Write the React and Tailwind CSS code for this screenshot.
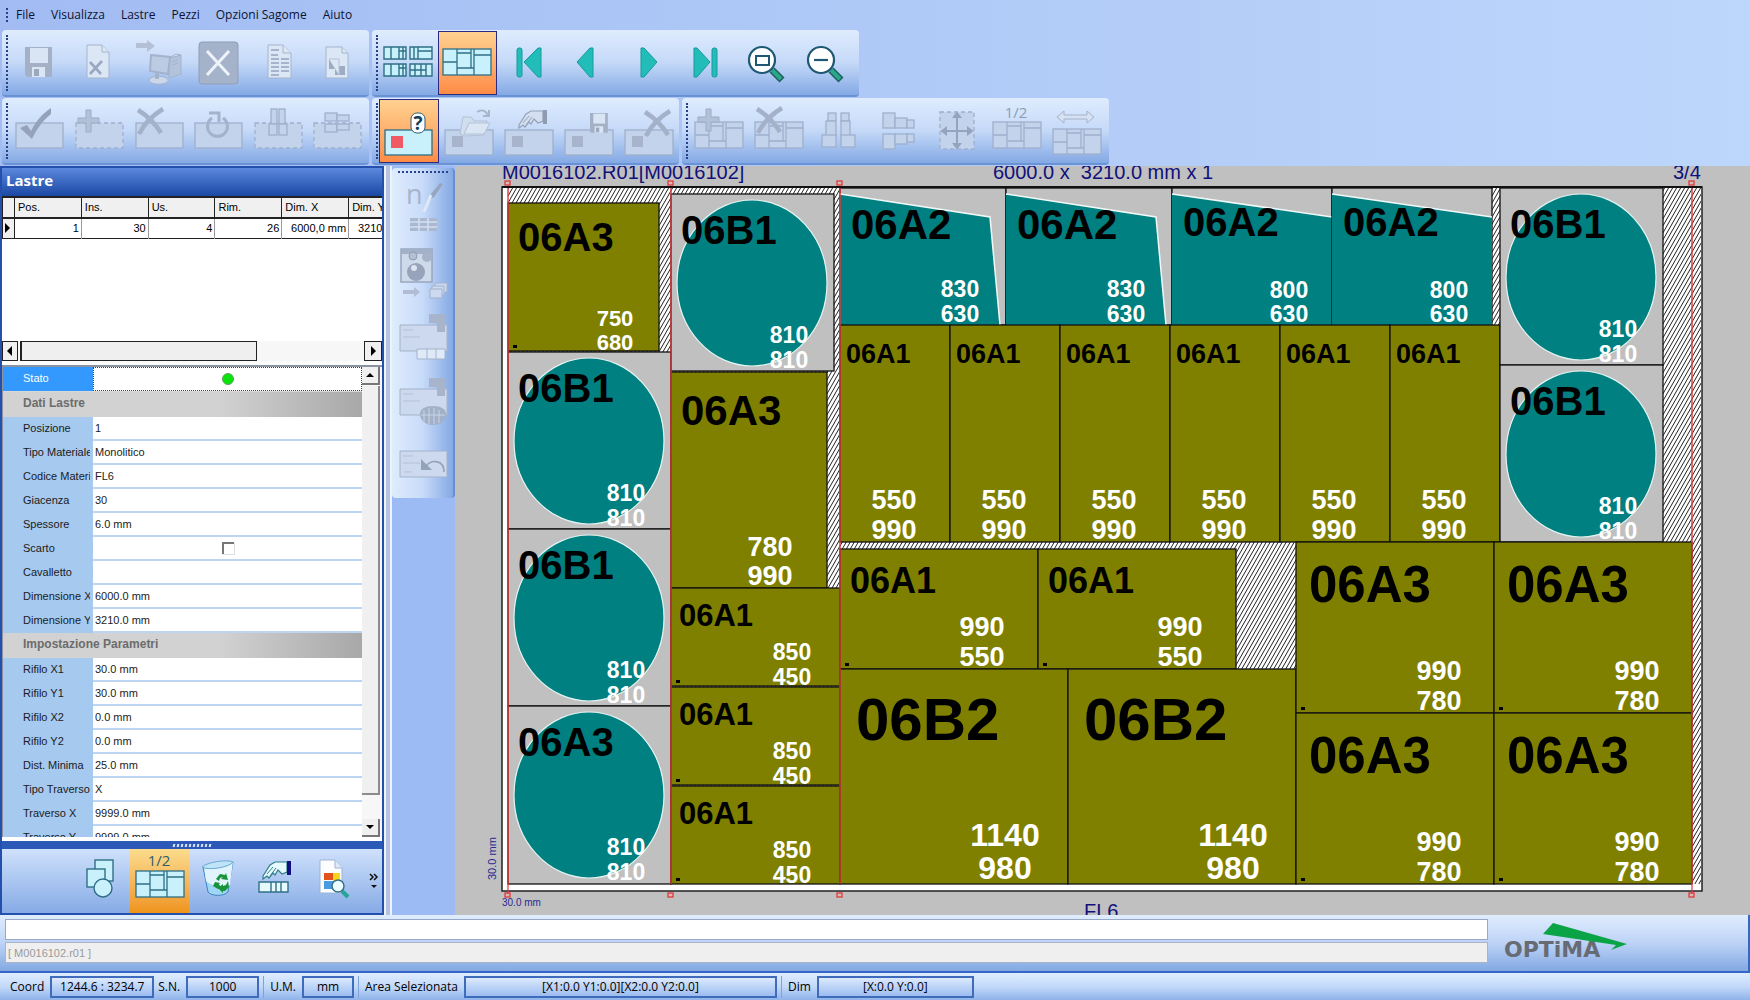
import { useState } from "react";

const menu = ["File", "Visualizza", "Lastre", "Pezzi", "Opzioni Sagome", "Aiuto"];

const columns = ["Pos.", "Ins.", "Us.", "Rim.", "Dim. X", "Dim. Y"];
const slabRow = ["1", "30", "4", "26", "6000,0 mm", "3210,0 mm"];

const properties = [
  { group: "Dati Lastre" },
  { label: "Posizione", value: "1" },
  { label: "Tipo Materiale", value: "Monolitico" },
  { label: "Codice Materiale", value: "FL6" },
  { label: "Giacenza", value: "30" },
  { label: "Spessore", value: "6.0 mm" },
  { label: "Scarto", check: true },
  { label: "Cavalletto", value: "" },
  { label: "Dimensione X", value: "6000.0 mm" },
  { label: "Dimensione Y", value: "3210.0 mm" },
  { group: "Impostazione Parametri" },
  { label: "Rifilo X1", value: "30.0 mm" },
  { label: "Rifilo Y1", value: "30.0 mm" },
  { label: "Rifilo X2", value: "0.0 mm" },
  { label: "Rifilo Y2", value: "0.0 mm" },
  { label: "Dist. Minima", value: "25.0 mm" },
  { label: "Tipo Traverso", value: "X" },
  { label: "Traverso X", value: "9999.0 mm" },
  { label: "Traverso Y", value: "9999.0 mm" },
];

/* ── Piece kinds: size, code text and dimension text, offsets from the piece corner ── */
const kinds = {
  a3s: { w: 151, h: 148, code: "06A3", fs: 40, cx: 10, cy: 48, dims: ["750", "680"], ds: 22, dx: 107, d1: 123, d2: 147, dot: true },
  a3m: { w: 156, h: 216, code: "06A3", fs: 42, cx: 10, cy: 53, dims: ["780", "990"], ds: 27, dx: 99, d1: 184, d2: 213 },
  a3l: { w: 198, h: 171, code: "06A3", fs: 51, cx: 13, cy: 60, dims: ["990", "780"], ds: 27, dx: 143, d1: 138, d2: 168, dot: true },
  b1: { w: 163, h: 177, code: "06B1", fs: 40, cx: 10, cy: 50, dims: ["810", "810"], ds: 23, dx: 118, d1: 149, d2: 174, circle: true },
  b1c: { w: 163, h: 178, code: "06A3", fs: 40, cx: 10, cy: 50, dims: ["810", "810"], ds: 23, dx: 118, d1: 149, d2: 174, circle: true },
  a1s: { w: 169, h: 98, code: "06A1", fs: 31, cx: 8, cy: 38, dims: ["850", "450"], ds: 23, dx: 121, d1: 72, d2: 97, dot: true },
  a1t: { w: 110, h: 217, code: "06A1", fs: 27, cx: 6, cy: 38, dims: ["550", "990"], ds: 27, dx: 54, d1: 184, d2: 214 },
  a1w: { w: 198, h: 120, code: "06A1", fs: 36, cx: 10, cy: 44, dims: ["990", "550"], ds: 27, dx: 142, d1: 87, d2: 117, dot: true },
  a2a: { w: 166, h: 137, code: "06A2", fs: 42, cx: 11, cy: 51, dims: ["830", "630"], ds: 23, dx: 120, d1: 109, d2: 134, shape: "0,6 150,29 160,137 0,137", edge: "0,6 150,29 160,137" },
  a2b: { w: 160, h: 137, code: "06A2", fs: 40, cx: 11, cy: 48, dims: ["800", "630"], ds: 23, dx: 117, d1: 110, d2: 134, shape: "0,6 160,29 160,137 0,137", edge: "0,6 160,29" },
  b2: { w: 228, h: 215, code: "06B2", fs: 60, cx: 16, cy: 71, dims: ["1140", "980"], ds: 32, dx: 165, d1: 177, d2: 210 },
};

const pieces = [
  ["a3s", 508, 203],
  ["b1", 508, 352],
  ["b1", 508, 529],
  ["b1c", 508, 706],
  ["b1", 671, 194],
  ["a3m", 671, 372],
  ["a1s", 671, 588],
  ["a1s", 671, 687],
  ["a1s", 671, 786],
  ["a2a", 840, 188],
  ["a2a", 1006, 188],
  ["a2b", 1172, 188],
  ["a2b", 1332, 188],
  ["a1t", 840, 325],
  ["a1t", 950, 325],
  ["a1t", 1060, 325],
  ["a1t", 1170, 325],
  ["a1t", 1280, 325],
  ["a1t", 1390, 325],
  ["b1", 1500, 188],
  ["b1", 1500, 365],
  ["a1w", 840, 549],
  ["a1w", 1038, 549],
  ["b2", 840, 669],
  ["b2", 1068, 669],
  ["a3l", 1296, 542],
  ["a3l", 1494, 542],
  ["a3l", 1296, 713],
  ["a3l", 1494, 713],
];

const cuts = [508, 671, 840, 1692];

/* ── Icons ── */
const ON = { stroke: "#2f6f86", fill: "#c9f1fc" };
const OFF = { stroke: "#9fb0cd", fill: "#c3d3ec" };

const Plate = ({ x, y, c = OFF, h = 26 }) => (
  <g transform={`translate(${x} ${y})`} stroke={c.stroke} strokeWidth="1.3">
    <rect width="48" height={h} fill={c.fill} />
    <path d={`M14 0v${h}M0 13h14M14 4h14M14 19h17M28 0v19M31 0v${h}M31 6h17`} fill="none" />
  </g>
);

const Box = ({ x, y, w, h, c = OFF, dash }) => (
  <rect x={x} y={y} width={w} height={h} fill={c.fill} stroke={c.stroke} strokeWidth="1.3" strokeDasharray={dash ? "4 3" : undefined} />
);

const Cross = ({ x, y }) => (
  <path
    transform={`translate(${x} ${y})`}
    d="M1 1c8 5 17 13 23 23M26 0C16 6 7 15 2 25"
    stroke="#a4b2c9"
    strokeWidth="4.5"
    fill="none"
  />
);

const Plus = ({ x, y }) => (
  <path transform={`translate(${x} ${y})`} d="M8 0h5v8h8v5h-8v9H8v-9H0V8h8z" fill="#b3c1d8" stroke="#9dabc4" />
);

const Hand = ({ x, y, on }) => (
  <g transform={`translate(${x} ${y})`}>
    <path d="M1 15 8 4 13 1h12v10l-5 2-4-4-3 5-2-2-4 5-2-2-4 3z" fill={on ? "#e6fafd" : "#d4e0f1"} stroke={on ? "#2f7f8a" : "#94a1b8"} strokeWidth="1.2" />
    <path d="m5 13 6-7m-3 9 6-8" stroke={on ? "#2f7f8a" : "#94a1b8"} fill="none" />
    <path d="M25 0h4v14h-4z" fill={on ? "#101080" : "#8f9bb0"} />
  </g>
);

const Lens = ({ children }) => (
  <>
    <path d="m39 39 10 10" stroke="#1f5f5c" strokeWidth="7" />
    <path d="m39 39 9 9" stroke="#2aa78a" strokeWidth="4" />
    <circle cx="29" cy="29" r="13" fill="#fff" stroke="#1f5872" strokeWidth="2.2" />
    {children}
  </>
);

const Floppy = ({ x, y, s = 1 }) => (
  <g transform={`translate(${x} ${y}) scale(${s})`}>
    <path d="M0 0h27v30H2l-2-2z" fill="#a3b0c6" />
    <path d="M5 1h18v15H5z" fill="#d9e4f4" />
    <path d="M7 20h13v10H7z" fill="#dbe5f3" />
    <path d="M9 22h5v7H9z" fill="#9ba9c0" />
  </g>
);

const PieceBox = () => (
  <>
    <Box x="6" y="31" w="48" h="25" />
    <path d="M13 37h11v11H13z" fill="#a7b4cb" />
  </>
);

const icons = {
  save: <Floppy x="16" y="16" />,
  discard: (
    <g stroke="#a6b5cd" fill="#dce7f6">
      <path d="M18 14h15l7 7v26H18z" />
      <path d="M33 14v7h7" />
      <path d="m21 31 11 12m1-13L21 43" strokeWidth="2.6" stroke="#9aa8bf" />
    </g>
  ),
  send: (
    <g stroke="#a4b3cc">
      <path d="M7 12h11V9l8 6-8 6v-4H7z" fill="#b3c0d5" stroke="none" />
      <path d="m40 27 12-3v19l-12 4z" fill="#b3c3db" />
      <path d="m40 27 7-4 5 1-12 3z" fill="#dbe6f5" />
      <path d="m22 24 19 2-2 17-18-3z" fill="#bccbe2" strokeWidth="2" />
      <path d="M20 49c1-5 18-5 19 0s-18 6-19 0z" fill="#ccd8ea" />
      <path d="M28 42v6" strokeWidth="4" />
      <path d="m43 31 6-2m-6 5 6-2" />
    </g>
  ),
  close: (
    <>
      <rect x="10" y="11" width="39" height="42" rx="3" fill="#a5b3ca" stroke="#8f9fb9" />
      <path d="m18 20 22 24m0-24L18 44" stroke="#eef3fb" strokeWidth="3" />
    </>
  ),
  list: (
    <g stroke="#a6b5cd" fill="#dce7f6">
      <path d="M19 14h15l8 8v25H19z" />
      <path d="M34 14v8h8" />
      <path d="M22 19h8m-8 5h7m-7 4h8m2 0h8m-18 4h8m2 0h8m-18 4h8m2 0h8m-18 4h8m2 0h8m-18 4h8" stroke="#94a3bc" strokeWidth="1.6" />
    </g>
  ),
  sheet: (
    <g stroke="#a6b5cd" fill="#dce7f6">
      <path d="M17 16h16l6 6v25H17z" />
      <path d="M33 16v6h6" />
      <path d="M20 28h10v7h6v9H26v-6h-6z" fill="#9eacc3" stroke="none" />
      <path d="M20 28h10v16" stroke="#b6c3d8" />
    </g>
  ),
  check: (
    <>
      <Box x="7" y="24" w="47" h="25" />
      <path d="m11 29 7-3 4 6c5-10 11-17 20-23v6c-9 7-14 15-19 25z" fill="#94a2ba" />
    </>
  ),
  add: (
    <>
      <Box x="7" y="24" w="47" h="25" dash />
      <Plus x="9" y="11" />
    </>
  ),
  remove: (
    <>
      <Box x="7" y="24" w="47" h="25" />
      <Cross x="8" y="10" />
    </>
  ),
  rotate: (
    <>
      <Box x="6" y="24" w="47" h="25" />
      <path d="M23 19a10 10 0 1 0 11 0M20 14h10v9" stroke="#a4b3cc" strokeWidth="3" fill="none" />
    </>
  ),
  alignV: (
    <>
      <Box x="6" y="24" w="47" h="25" dash />
      <Box x="22" y="10" w="6" h="15" />
      <Box x="30" y="10" w="6" h="15" />
      <Box x="20" y="25" w="8" h="11" />
      <Box x="30" y="25" w="8" h="11" />
    </>
  ),
  alignH: (
    <>
      <Box x="5" y="24" w="47" h="25" dash />
      <Box x="16" y="14" w="12" h="8" />
      <Box x="28" y="16" w="12" h="6" />
      <Box x="16" y="25" w="12" h="8" />
      <Box x="28" y="25" w="12" h="6" />
    </>
  ),
  multi: (
    <g stroke="#2f6f86" strokeWidth="1.4" fill="#c9f1fc">
      <path d="M5 16h22v12H5zM31 16h22v12H31zM5 33h22v12H5zM31 33h22v12H31z" />
      <path d="M12 16v12m8-12v12m4-12v12m-4-8h7M35 16v12m4-12v12m0-8h14M12 33v12m8-12v12m4-12v12m-4-8h7M31 39h16m-11-6v12m6-12v12m5-12v12" fill="none" />
    </g>
  ),
  single: <Plate x="5" y="18" c={ON} />,
  first: (
    <g fill="#22bdb8" stroke="#169a9a">
      <rect x="20" y="17" width="5" height="29" rx="2" />
      <path d="M44 17v29h-3L27 31l14-14z" strokeLinejoin="round" />
    </g>
  ),
  prev: <path d="M37 17v29h-3L21 31l13-14z" fill="#22bdb8" stroke="#169a9a" strokeLinejoin="round" />,
  next: <path d="M26 17v29h3l13-15-13-14z" fill="#22bdb8" stroke="#169a9a" strokeLinejoin="round" />,
  last: (
    <g fill="#22bdb8" stroke="#169a9a">
      <path d="M20 17v29h3l13-15-13-14z" strokeLinejoin="round" />
      <rect x="38" y="17" width="5" height="29" rx="2" />
    </g>
  ),
  zoomFit: (
    <Lens>
      <path d="M23 25h13v9H23z" fill="none" stroke="#1f5872" strokeWidth="2" />
    </Lens>
  ),
  zoomOut: (
    <Lens>
      <path d="M22 29h14" stroke="#1f5872" strokeWidth="2.2" />
    </Lens>
  ),
  query: (
    <>
      <Box x="6" y="31" w="47" h="25" c={ON} />
      <path d="M12 37h12v12H12z" fill="#f05a64" />
      <rect x="32" y="14" width="14" height="20" rx="6" fill="#fff" stroke="#2f5f76" />
      <text x="39" y="31" textAnchor="middle" fontSize="19" fontWeight="700" fill="#123f5c">?</text>
    </>
  ),
  open: (
    <>
      <PieceBox />
      <path d="M21 35 24 18h8l3 4h13l-3 14-19 1z" fill="#d1deef" stroke="#b3c1d8" />
      <path d="m25 35 5-11h21l-6 11z" fill="#dbe6f5" stroke="#b3c1d8" />
      <path d="M38 13c5-3 8-2 11 3m1-5v6h-6" stroke="#a8b6cc" strokeWidth="2" fill="none" />
    </>
  ),
  handPiece: (
    <>
      <PieceBox />
      <Hand x="19" y="11" />
    </>
  ),
  savePiece: (
    <>
      <PieceBox />
      <Floppy x="31" y="14" s="0.66" />
    </>
  ),
  deletePiece: (
    <>
      <PieceBox />
      <Cross x="25" y="12" />
    </>
  ),
  addPlate: (
    <>
      <Plate x="6" y="23" />
      <Plus x="9" y="10" />
    </>
  ),
  removePlate: (
    <>
      <Plate x="6" y="23" />
      <Cross x="7" y="9" />
    </>
  ),
  stackV: (
    <>
      <Box x="19" y="14" w="8" h="8" />
      <Box x="17" y="22" w="10" h="15" />
      <Box x="13" y="36" w="14" h="12" />
      <Box x="32" y="14" w="8" h="8" />
      <Box x="32" y="22" w="9" h="15" />
      <Box x="32" y="36" w="14" h="12" />
    </>
  ),
  stackH: (
    <>
      <Box x="14" y="14" w="12" h="15" />
      <Box x="26" y="19" w="12" h="10" />
      <Box x="38" y="21" w="7" h="8" />
      <Box x="14" y="35" w="12" h="15" />
      <Box x="26" y="35" w="12" h="10" />
      <Box x="38" y="35" w="7" h="8" />
    </>
  ),
  move: (
    <>
      <Box x="11" y="13" w="34" h="37" dash />
      <g stroke="#94a4bf" strokeWidth="2" fill="#94a4bf">
        <path d="M28 17v30M15 32h26" />
        <path d="m28 14 3 4h-6zm0 35 3-4h-6zM13 32l4-3v6zm30 0-4-3v6z" />
      </g>
    </>
  ),
  half: (
    <>
      <Plate x="4" y="23" />
      <text x="27" y="19" textAnchor="middle" fontSize="15" fill="#8d9cb5">1/2</text>
    </>
  ),
  stretch: (
    <>
      <path d="m8 18 7-6v4h23v-4l7 6-7 6v-4H15v4z" fill="#d6e2f3" stroke="#a4b3cc" />
      <Plate x="4" y="30" h="25" />
    </>
  ),
  shapes: (
    <g fill="#c9f1fc" stroke="#2f6f86" strokeWidth="1.4">
      <rect x="24" y="11" width="18" height="21" />
      <rect x="16" y="20" width="18" height="18" />
      <circle cx="32" cy="39" r="9" />
    </g>
  ),
  halfOn: (
    <>
      <Plate x="6" y="22" c={ON} />
      <text x="29" y="17" textAnchor="middle" fontSize="15" fill="#2f5f6c">1/2</text>
    </>
  ),
  bin: (
    <>
      <path d="m14 18 5 25c3 4 15 5 20 0l5-30-12 4c-6 2-13 2-18 1z" fill="#9fd5f5" stroke="#3f83c0" />
      <path d="m15 18 17-1 12-5-3 24-7 6c-2-7-12-4-17-10z" fill="#e1f4fd" />
      <path d="M13 18c5-5 26-8 31-5-3 5-24 9-31 5z" fill="#bfe3f7" stroke="#6aa9d6" />
      <path d="m27 30 4-5 5 1 1-2 2 7-7-1 2-2-3 1-1 3zm12 2 1 6-4 4h-2v2l-5-5 5-4v2l3-1zm-13 1 5 1-1 1 2 4-3 1-5-3z" fill="#179437" />
    </>
  ),
  handStock: (
    <>
      <Hand x="14" y="12" on />
      <path d="M11 33h29v10H11z" fill="#e6fafd" stroke="#2f6f86" strokeWidth="1.4" />
      <path d="M23 33v10m5-10v10m5-10v10" stroke="#2f6f86" strokeWidth="1.4" />
    </>
  ),
  preview: (
    <>
      <path d="M13 11h15l7 8v25H13z" fill="#fbfdff" stroke="#9fb3d4" />
      <path d="M28 11v8h7" fill="#dfe9f8" stroke="#9fb3d4" />
      <path d="M17 24h9v7h-9z" fill="#e4521c" />
      <path d="M26 24h7v9h-7z" fill="#f8d51c" />
      <path d="M17 32h9v8h-9z" fill="#4b9be0" />
      <path d="m35 42 6 6" stroke="#27a59a" strokeWidth="4" />
      <circle cx="31" cy="37" r="6" fill="#eefcff" stroke="#2f6f86" strokeWidth="1.4" />
    </>
  ),
  note: (
    <>
      <path d="m50 8-9 13-4 2 1-5 9-11z" fill="#97a5bc" />
      <path d="m38 19-7 17" stroke="#dfe8f5" strokeWidth="3" />
      <text x="13" y="28" fontSize="27" fill="#a7b4ca">n</text>
      <path d="M17 42h27v13H17z" fill="#aab8d0" />
      <path d="M17 46h27M17 51h27M26 42v13m9-13v13" stroke="#d3dff1" strokeWidth="1.5" />
    </>
  ),
  balls: (
    <>
      <rect x="8" y="9" width="31" height="33" fill="#ced9ea" stroke="#98a7c0" strokeWidth="1.5" />
      <path d="M8 9h31v5H8z" fill="#a3b1c8" />
      <circle cx="20" cy="16" r="4" fill="#b3bfd2" stroke="#8d9bb3" />
      <circle cx="34" cy="17" r="5" fill="#a6b3c9" />
      <circle cx="23" cy="32" r="9" fill="#96a3ba" />
      <circle cx="21" cy="28" r="3" fill="#dbe4f0" />
      <path d="M10 50h11v-3l6 5-6 5v-3H10z" fill="#b0bdd2" />
      <path d="M37 49h12v9H37zM39 49v-3h12v9h-2M42 46v-3h12v9h-2" fill="#ccd9ee" stroke="#a4b3cc" />
    </>
  ),
  toStock: (
    <>
      <path d="M7 21h47v26H7z" fill="#ccd9ee" stroke="#a4b3cc" />
      <path d="M10 33h17m-17-7h10" stroke="#b3c1d8" />
      <path d="M36 10h16v18h-8v-9h-8z" fill="#a7b4cb" />
      <path d="M24 45h28v10H24zM34 45v10m9-10v10" fill="#e0e9f7" stroke="#a4b3cc" />
    </>
  ),
  toBasket: (
    <>
      <path d="M7 21h47v26H7z" fill="#ccd9ee" stroke="#a4b3cc" />
      <path d="M10 33h17m-17-7h10" stroke="#b3c1d8" />
      <path d="M36 10h16v18h-8v-9h-8z" fill="#a7b4cb" />
      <path d="M27 46c0-5 5-8 13-8s13 3 13 8-4 11-13 11-13-6-13-11z" fill="#a3b1c8" />
      <path d="M31 42v12m5-14v16m5-16v16m5-14v13M28 47h24" stroke="#c8d4e6" />
    </>
  ),
  undo: (
    <>
      <path d="M7 19h47v26H7z" fill="#ccd9ee" stroke="#a4b3cc" />
      <path d="M10 31h17m-17-7h10M11 40h8" stroke="#b3c1d8" />
      <path d="M28 27v11h11z" fill="#94a2ba" />
      <path d="M33 34c6-7 18-6 18 6" stroke="#94a2ba" strokeWidth="1.6" fill="none" />
    </>
  ),
};

const Icon = ({ name }) => (
  <svg viewBox="0 0 60 64" className="h-16 w-[60px] shrink-0 font-['Open_Sans',sans-serif]" aria-hidden="true">
    {icons[name]}
  </svg>
);

const ToolButton = ({ name, active, narrow }) => (
  <button
    aria-label={name}
    aria-pressed={active}
    className={`flex h-16 items-center justify-center overflow-hidden border ${narrow ? "w-[59px]" : "w-[60px]"} ${
      active ? "border-[#2a2a80] bg-linear-to-b from-[#ffd190] to-[#ff8c46]" : "border-transparent"
    }`}
  >
    <Icon name={name} />
  </button>
);

const ToolBar = ({ tools, active, narrow }) => (
  <div
    role="toolbar"
    className={`flex h-[67px] rounded-sm border-b-2 border-[#6a93d6] bg-linear-to-b from-[#dfecfe] via-[#c5d9f8] via-50% to-[#84a9e4] pt-px pl-1 ${narrow ? "pr-2" : ""}`}
  >
    <span className="my-1 w-[3px] border-l-2 border-dotted border-[#27418a]" />
    {tools.map((t) => (
      <ToolButton key={t} name={t} active={t === active} narrow={narrow} />
    ))}
  </div>
);

const Arrow = ({ d }) => (
  <svg viewBox="0 0 10 10" className="size-2.5" aria-hidden="true">
    <path d={d} fill="#000" />
  </svg>
);

const SlabTable = () => (
  <div className="flex h-[165px] flex-col justify-between overflow-hidden bg-white">
    <table className="w-[414px] table-fixed border-collapse text-[11px] leading-none">
      <thead>
        <tr className="h-[21px] border-y-2 border-[#222] bg-[#f0f0f0]">
          <th className="w-3 border border-[#222]" />
          {columns.map((c) => (
            <th key={c} className="overflow-hidden border-x border-[#222] pl-[3px] text-left font-normal whitespace-nowrap">
              {c}
            </th>
          ))}
        </tr>
      </thead>
      <tbody>
        <tr className="h-5 border-b border-[#222]">
          <td className="border border-[#222] bg-[#f0f0f0]">
            <Arrow d="M2 0v10l5-5z" />
          </td>
          {slabRow.map((v, i) => (
            <td key={i} className="overflow-hidden border-r border-[#999] pr-0.5 text-right whitespace-nowrap">
              {v}
            </td>
          ))}
        </tr>
      </tbody>
    </table>
    <div className="flex h-5 bg-[#f7f7f7]">
      <button aria-label="Sinistra" className="flex w-4 items-center justify-center border border-[#222] bg-[#f0f0f0]">
        <Arrow d="M7 0v10L2 5z" />
      </button>
      <div className="ml-0.5 w-[237px] border border-l-2 border-[#222] bg-[#efefef]" />
      <button aria-label="Destra" className="ml-auto flex w-[18px] items-center justify-center border border-[#222] bg-[#f0f0f0]">
        <Arrow d="M3 0v10l5-5z" />
      </button>
    </div>
  </div>
);

const PropertyRow = ({ item }) => {
  const id = item.label.replace(/\W/g, "");
  return (
    <div className="flex h-6 shrink-0">
      <label htmlFor={id} className="w-[90px] shrink-0 overflow-hidden border-r-3 border-[#a6c9ef] bg-[#a6c9ef] pl-5 leading-[22px] whitespace-nowrap">
        {item.label}
      </label>
      <div className="flex min-w-0 flex-1 items-center justify-center border-b-2 border-[#bdd5f3] bg-white">
        {item.check ? (
          <input id={id} type="checkbox" className="size-3 appearance-none border-t-2 border-l-2 border-[#777] bg-white shadow-[1px_1px_0_#ddd]" />
        ) : (
          <input id={id} defaultValue={item.value} className="w-full bg-transparent pl-0.5 outline-none" />
        )}
      </div>
    </div>
  );
};

const Properties = () => (
  <div className="flex min-h-0 flex-1 overflow-hidden border-t-2 border-l border-[#8a93a0] text-[11px] text-[#1b1b1b]">
    <div className="flex min-w-0 flex-1 flex-col overflow-hidden">
      <div className="flex h-[25px] shrink-0 border-b border-[#d8d8d8]">
        <span className="w-[90px] bg-[#3399ff] pl-5 leading-[22px] text-white">Stato</span>
        <span className="flex flex-1 items-center justify-center border border-dotted border-[#444] bg-white">
          <span className="size-3 rounded-full border border-[#5fa05f] bg-[#0be40b]" />
        </span>
      </div>
      {properties.map((p) =>
        p.group ? (
          <h3
            key={p.group}
            className="h-[25px] shrink-0 bg-linear-to-r from-[#d2d2d2] from-60% to-[#a8a8a8] pl-5 text-[12px] leading-[22px] font-bold text-[#6c6c6c]"
          >
            {p.group}
          </h3>
        ) : (
          <PropertyRow key={p.label} item={p} />
        )
      )}
    </div>
    <div className="flex w-5 flex-col bg-[#f7f7f7] pr-0.5">
      <button aria-label="Su" className="flex h-[18px] items-center justify-center border-r-2 border-b-2 border-[#777] bg-[#f0f0f0]">
        <Arrow d="M1 7h8L5 3z" />
      </button>
      <div className="mt-px mb-6 flex-1 border-r-2 border-b-2 border-[#8c8c8c] bg-[#f0f0f0]" />
      <button aria-label="Giù" className="flex h-[18px] items-center justify-center border-r-2 border-b-2 border-[#777] bg-[#f0f0f0]">
        <Arrow d="M1 3h8L5 7z" />
      </button>
    </div>
  </div>
);

const SidePanel = () => {
  const [tab, setTab] = useState("halfOn");
  return (
    <aside className="flex w-96 shrink-0 flex-col border-2 border-[#2350ad] bg-white">
      <h2 className="h-7 shrink-0 bg-linear-to-b from-[#5c88dd] to-[#1a48a4] pl-1 font-['Open_Sans',sans-serif] text-[15px] leading-[24px] font-bold text-white">
        Lastre
      </h2>
      <SlabTable />
      <div className="h-1 shrink-0" />
      <Properties />
      <div className="mt-1 flex h-2 shrink-0 items-center justify-center gap-0.5 bg-[#2c59b8]">
        {Array.from({ length: 10 }, (_, i) => (
          <span key={i} className="h-[3px] w-0.5 -skew-x-12 bg-[#dce8fb]" />
        ))}
      </div>
      <div className="flex h-16 shrink-0 justify-end bg-linear-to-b from-[#cfe1fb] to-[#87abe6]">
        {["shapes", "halfOn", "bin", "handStock", "preview"].map((t) => (
          <button
            key={t}
            aria-label={t}
            onClick={() => setTab(t)}
            className={`flex w-[59px] justify-center overflow-hidden ${tab === t ? "bg-linear-to-b from-[#fbdc8c] to-[#ee9417]" : ""}`}
          >
            <Icon name={t} />
          </button>
        ))}
        <button aria-label="Altro" className="flex w-4 items-center justify-center">
          <svg viewBox="0 0 10 18" className="h-[18px] w-2.5">
            <path d="m1 2 3 3-3 3m4-6 3 3-3 3" stroke="#111" strokeWidth="1.5" fill="none" />
            <path d="M2 13h6l-3 3z" fill="#111" />
          </svg>
        </button>
      </div>
    </aside>
  );
};

const Piece = ({ kind, x, y }) => {
  const k = kinds[kind];
  const plain = !k.circle && !k.shape;
  return (
    <g transform={`translate(${x} ${y})`}>
      <rect width={k.w} height={k.h} fill={plain ? "#808000" : "#c0c0c0"} stroke="#111" strokeWidth="1.3" />
      {k.circle && <ellipse cx="81" cy="89" rx="75" ry="83" fill="#008080" stroke="#e4f4f2" strokeWidth="1.2" />}
      {k.shape && <polygon points={k.shape} fill="#008080" />}
      {k.edge && <polyline points={k.edge} fill="none" stroke="#f2f8f8" strokeWidth="1.5" />}
      {k.dot && <rect x="5" y={k.h - 6} width="4" height="3" fill="#000" />}
      <text x={k.cx} y={k.cy} fontSize={k.fs} fill="#000">
        {k.code}
      </text>
      <g fontSize={k.ds} fill="#fff" textAnchor="middle">
        <text x={k.dx} y={k.d1}>{k.dims[0]}</text>
        <text x={k.dx} y={k.d2}>{k.dims[1]}</text>
      </g>
    </g>
  );
};

const CuttingPlan = () => (
  <svg viewBox="455 166 1295 749" preserveAspectRatio="xMidYMin meet" className="h-full w-full font-['Liberation_Sans',sans-serif]">
    <defs>
      <pattern id="waste" width="4" height="7" patternUnits="userSpaceOnUse">
        <rect width="4" height="7" fill="#fff" />
        <path d="M-1 8.75 5-1.75M-5 8.75 1-1.75M3 8.75 9-1.75" stroke="#222" strokeWidth="1" />
      </pattern>
    </defs>

    <g fontSize="20" fill="#10107c">
      <text x="502" y="179">M0016102.R01[M0016102]</text>
      <text x="993" y="179">{"6000.0 x \u00a03210.0 mm x 1"}</text>
      <text x="1673" y="179">3/4</text>
      <text x="1084" y="918">FL6</text>
    </g>
    <text x="502" y="906" fontSize="10" fill="#2a2a90">30.0 mm</text>
    <text transform="translate(496 880) rotate(-90)" fontSize="11" fill="#2a2a90">30.0 mm</text>

    <rect x="502" y="187" width="1200" height="704" fill="#fff" stroke="#222" strokeWidth="1.5" />
    <rect x="508" y="188" width="1193" height="696" fill="url(#waste)" />
    <g fontWeight="700">
      {pieces.map(([kind, x, y]) => (
        <Piece key={`${x}-${y}`} kind={kind} x={x} y={y} />
      ))}
    </g>
    <path d="M502 187h1200" stroke="#111" strokeWidth="2" />

    {cuts.map((x) => (
      <g key={x} stroke="#e0393c" fill="#d9b8b8">
        <path d={`M${x} 188v696`} strokeWidth="1.4" />
        <rect x={x - 3} y="181" width="5" height="4" strokeWidth="1.3" />
        <rect x={x - 3} y="893" width="5" height="4" strokeWidth="1.3" />
      </g>
    ))}
    <path d="M508 884v10M1692 884v10" stroke="#e0393c" strokeWidth="1.2" />
  </svg>
);

const Logo = () => (
  <svg viewBox="0 0 130 44" className="h-11 w-[130px]" role="img" aria-label="Optima">
    <text x="0" y="38" fontSize="22" fontWeight="700" fill="#666b74" className="font-['DejaVu_Sans',sans-serif]">
      OPTiMA
    </text>
    <path d="M49 4 123 25 107 31 112 26 39 15z" fill="#0aa447" />
  </svg>
);

const StatusField = ({ label, value, width, sep }) => (
  <div className={`flex items-center gap-1.5 ${sep ? "border-l border-[#7fa2dc] pl-1.5" : ""}`}>
    <span>{label}</span>
    <output className={`h-[22px] border-2 border-[#3f6cba] bg-linear-to-b from-[#dceafd] to-[#9cbcf0] text-center leading-[18px] ${width}`}>{value}</output>
  </div>
);

const App = () => (
  <div className="flex h-screen flex-col overflow-hidden bg-[#9fbdf4] font-['Liberation_Sans',sans-serif] text-black">
    <header className="shrink-0 bg-linear-to-r from-[#a2bcf3] to-[#bdd6fb]">
      <nav className="flex h-[30px] items-center gap-4 pl-1.5 font-['Open_Sans',sans-serif] text-[12px] text-[#0c1230]">
        <span className="-mr-2 h-3.5 border-l-2 border-dotted border-[#27418a]" />
        {menu.map((m) => (
          <button key={m}>{m}</button>
        ))}
      </nav>
      <div className="mb-px flex gap-[3px] pl-0.5">
        <ToolBar tools={["save", "discard", "send", "close", "list", "sheet"]} />
        <ToolBar tools={["multi", "single", "first", "prev", "next", "last", "zoomFit", "zoomOut"]} active="single" narrow />
      </div>
      <div className="flex gap-[3px] pb-px pl-0.5">
        <ToolBar tools={["check", "add", "remove", "rotate", "alignV", "alignH"]} />
        <ToolBar tools={["query", "open", "handPiece", "savePiece", "deletePiece"]} active="query" />
        <ToolBar tools={["addPlate", "removePlate", "stackV", "stackH", "move", "half", "stretch"]} />
      </div>
    </header>

    <main className="flex min-h-0 flex-1">
      <SidePanel />
      <div className="w-2 shrink-0 border-x-2 border-[#eef3fb] bg-[#b4c3df]" />
      <div className="w-[63px] shrink-0 bg-[#9cbbf5] pt-0.5">
        <div role="toolbar" className="flex flex-col items-center rounded-sm border-r-2 border-[#6a8fd0] bg-linear-to-r from-[#dfecfe] via-[#c8dbf9] via-50% to-[#84a9e4] pb-0.5">
          <span className="my-[3px] w-[50px] border-t-2 border-dotted border-[#27418a]" />
          {["note", "balls", "toStock", "toBasket", "undo"].map((t) => (
            <ToolButton key={t} name={t} />
          ))}
        </div>
      </div>
      <section className="min-w-0 flex-1 bg-[#c0c0c0]">
        <CuttingPlan />
      </section>
    </main>

    <footer className="shrink-0 font-['Open_Sans',sans-serif] text-[12px]">
      <div className="flex items-center gap-4 border-r-2 border-b-2 border-[#3567c6] bg-linear-to-b from-[#e0edfe] via-[#bdd3f6] to-[#83a8e3] pt-1 pb-2 pl-[5px]">
        <div className="flex flex-1 flex-col gap-0.5 font-['Liberation_Sans',sans-serif] text-[11px]">
          <input aria-label="Comando" className="h-[21px] border border-[#97a9c6] bg-white px-1" />
          <input aria-label="Messaggi" disabled defaultValue="[ M0016102.r01 ]" className="h-[21px] border border-[#a9b4c6] bg-[#efefef] px-0.5 text-[#9a9a9a]" />
        </div>
        <div className="w-[244px]">
          <Logo />
        </div>
      </div>
      <div className="flex h-[27px] items-center gap-1 bg-linear-to-b from-[#dfecfe] via-[#c3d9f9] to-[#8fb3ea] pl-2.5">
        <StatusField label="Coord" value="1244.6 : 3234.7" width="w-[104px]" />
        <StatusField label="S.N." value="1000" width="w-[73px]" />
        <StatusField label="U.M." value="mm" width="w-[52px]" sep />
        <StatusField label="Area Selezionata" value="[X1:0.0 Y1:0.0][X2:0.0 Y2:0.0]" width="w-[313px]" sep />
        <StatusField label="Dim" value="[X:0.0 Y:0.0]" width="w-[157px]" sep />
      </div>
    </footer>
  </div>
);

export default App;
